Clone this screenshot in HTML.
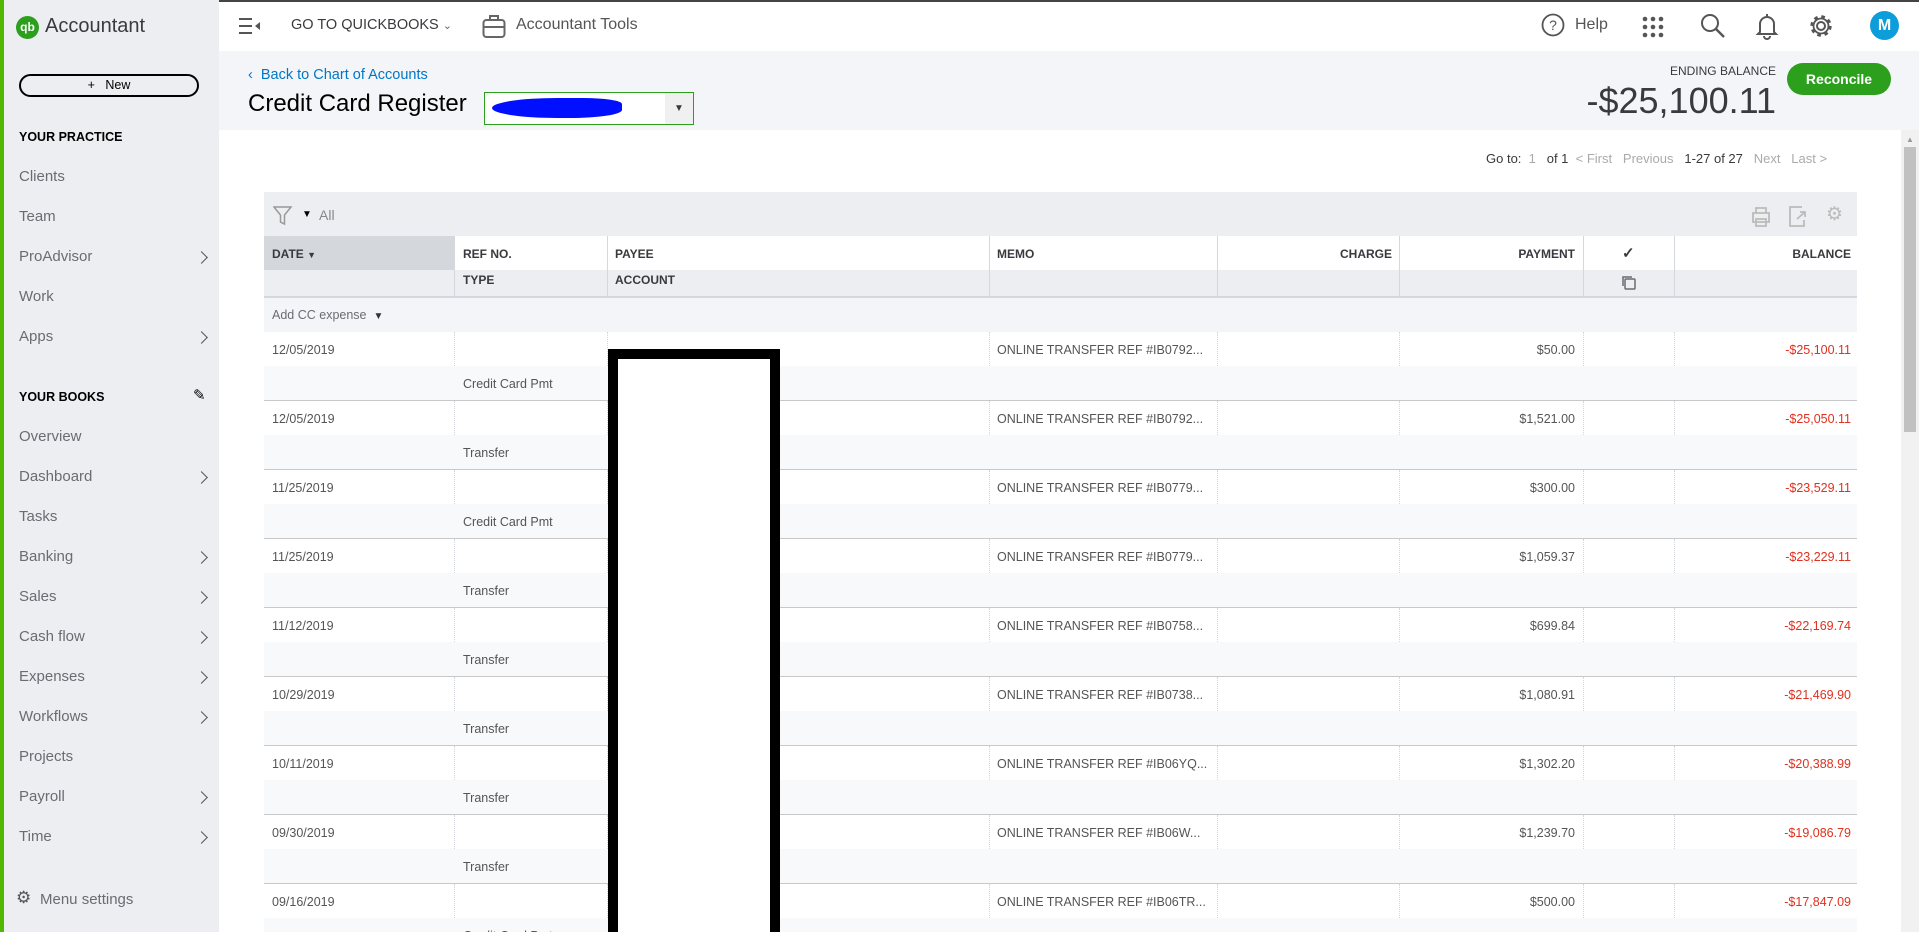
<!DOCTYPE html>
<html><head><meta charset="utf-8"><style>
*{box-sizing:border-box;margin:0;padding:0}
html,body{width:1919px;height:932px;overflow:hidden}
body{font-family:"Liberation Sans",sans-serif;background:#fff;position:relative;color:#393a3d}
#wrap{position:relative;width:1919px;height:932px;overflow:hidden}
.a{position:absolute;white-space:nowrap}
#side{left:0;top:0;width:219px;height:932px;background:#eceef1;border-left:4px solid #53b700}
.nav{position:absolute;left:15px;font-size:15px;color:#6b6c72}
.chev{position:absolute;left:193px;width:9px;height:9px;border-right:1.6px solid #555;border-top:1.6px solid #555;transform:rotate(45deg)}
.sec{position:absolute;left:15px;font-size:12.5px;font-weight:bold;color:#000}
.hd{font-size:12px;font-weight:bold;color:#393a3d}
.cell{font-size:12.5px;color:#555}
.r{text-align:right}
.vl{position:absolute;width:0;border-left:1px dotted #d4d7dc}
</style></head><body><div id="wrap">
<div class="a" style="left:0;top:0;width:1919px;height:2px;background:#444"></div>
<div class="a" id="side">
 <div class="a" style="left:12px;top:16px;width:23px;height:23px;border-radius:50%;background:#2ca01c;color:#fff;font-size:12px;font-weight:bold;text-align:center;line-height:23px">qb</div>
 <div class="a" style="left:41px;top:15px;font-size:20px;color:#393a3d">Accountant</div>
 <div class="a" style="left:15px;top:74px;width:180px;height:23px;border:2px solid #000;border-radius:12px;text-align:center;font-size:12.5px;line-height:19px;color:#000">+&nbsp;&nbsp; New</div>
 <div class="sec" style="top:130px">YOUR PRACTICE</div>
 <div class="nav" style="top:168px">Clients</div>
 <div class="nav" style="top:208px">Team</div>
 <div class="nav" style="top:248px">ProAdvisor</div><div class="chev" style="top:253px"></div>
 <div class="nav" style="top:288px">Work</div>
 <div class="nav" style="top:328px">Apps</div><div class="chev" style="top:333px"></div>
 <div class="sec" style="top:390px">YOUR BOOKS</div>
 <div class="a" style="left:189px;top:386px;font-size:15px;color:#000">✎</div>
 <div class="nav" style="top:428px">Overview</div>
 <div class="nav" style="top:468px">Dashboard</div><div class="chev" style="top:473px"></div>
 <div class="nav" style="top:508px">Tasks</div>
 <div class="nav" style="top:548px">Banking</div><div class="chev" style="top:553px"></div>
 <div class="nav" style="top:588px">Sales</div><div class="chev" style="top:593px"></div>
 <div class="nav" style="top:628px">Cash flow</div><div class="chev" style="top:633px"></div>
 <div class="nav" style="top:668px">Expenses</div><div class="chev" style="top:673px"></div>
 <div class="nav" style="top:708px">Workflows</div><div class="chev" style="top:713px"></div>
 <div class="nav" style="top:748px">Projects</div>
 <div class="nav" style="top:788px">Payroll</div><div class="chev" style="top:793px"></div>
 <div class="nav" style="top:828px">Time</div><div class="chev" style="top:833px"></div>
 <div class="nav" style="top:891px;left:36px">Menu settings</div>
 <div class="a" style="left:12px;top:888px;font-size:17px;color:#555">⚙</div>
</div>
<svg class="a" style="left:239px;top:17px" width="22" height="18"><g stroke="#555" stroke-width="2"><line x1="0" y1="2" x2="13" y2="2"/><line x1="0" y1="9" x2="13" y2="9"/><line x1="0" y1="16" x2="13" y2="16"/></g><path d="M21 5 L16 9 L21 13Z" fill="#555"/></svg>
<div class="a" style="left:291px;top:17px;font-size:14.5px;color:#393a3d">GO TO QUICKBOOKS <span style="font-size:11px;color:#666">&#8964;</span></div>
<svg class="a" style="left:482px;top:13px" width="24" height="26"><rect x="1.5" y="7" width="21" height="17" rx="3" fill="none" stroke="#666" stroke-width="2"/><path d="M8 7V3h8v4M1.5 14h21" fill="none" stroke="#666" stroke-width="2"/></svg>
<div class="a" style="left:516px;top:16px;font-size:16px;color:#555">Accountant Tools</div>
<svg class="a" style="left:1541px;top:13px" width="24" height="24"><circle cx="12" cy="12" r="10.5" fill="none" stroke="#555" stroke-width="1.8"/><text x="12" y="17" font-size="14" text-anchor="middle" fill="#555" font-family="Liberation Sans">?</text></svg>
<div class="a" style="left:1575px;top:16px;font-size:16px;color:#555">Help</div>
<svg class="a" style="left:1642px;top:16px" width="22" height="22"><g fill="#555"><circle cx="3" cy="3" r="2.3"/><circle cx="11" cy="3" r="2.3"/><circle cx="19" cy="3" r="2.3"/><circle cx="3" cy="11" r="2.3"/><circle cx="11" cy="11" r="2.3"/><circle cx="19" cy="11" r="2.3"/><circle cx="3" cy="19" r="2.3"/><circle cx="11" cy="19" r="2.3"/><circle cx="19" cy="19" r="2.3"/></g></svg>
<svg class="a" style="left:1700px;top:13px" width="26" height="26"><circle cx="10" cy="10" r="8" fill="none" stroke="#555" stroke-width="2"/><line x1="16" y1="16" x2="24" y2="24" stroke="#555" stroke-width="2.4"/></svg>
<svg class="a" style="left:1755px;top:12px" width="24" height="28"><path d="M12 2v2M5 20V12a7 7 0 0 1 14 0v8l2 2H3z M9 24a3 3 0 0 0 6 0" fill="none" stroke="#555" stroke-width="2"/></svg>
<svg class="a" style="left:1808px;top:13px" width="26" height="26"><circle cx="13" cy="13" r="4" fill="none" stroke="#555" stroke-width="2"/><circle cx="13" cy="13" r="9" fill="none" stroke="#555" stroke-width="3.4" stroke-dasharray="3.5 3.57"/><circle cx="13" cy="13" r="7.5" fill="none" stroke="#555" stroke-width="1.8"/></svg>
<div class="a" style="left:1870px;top:11px;width:29px;height:29px;border-radius:50%;background:#0d9ddb;color:#fff;font-weight:bold;font-size:16px;text-align:center;line-height:29px">M</div>
<div class="a" style="left:219px;top:51px;width:1700px;height:79px;background:#f4f5f8"></div>
<div class="a" style="left:248px;top:67px;font-size:14.5px;color:#0077c5">&#8249;&nbsp; Back to Chart of Accounts</div>
<div class="a" style="left:248px;top:90px;font-size:24px;color:#000">Credit Card Register</div>
<div class="a" style="left:484px;top:92px;width:210px;height:33px;border:1px solid #2ca01c;background:#fff"></div>
<div class="a" style="left:492px;top:98px;width:130px;height:20px;background:#0010ff;border-radius:50% 30% 40% 50%"></div>
<div class="a" style="left:665px;top:93px;width:28px;height:31px;background:#f0f0f0;font-size:10px;text-align:center;line-height:31px">▼</div>
<div class="a r" style="right:143px;top:64px;font-size:12px;color:#393a3d">ENDING BALANCE</div>
<div class="a r" style="right:143px;top:80px;font-size:36px;color:#393a3d">-$25,100.11</div>
<div class="a" style="left:1787px;top:63px;width:104px;height:32px;background:#2ca01c;border-radius:16px;color:#fff;font-weight:bold;font-size:14px;text-align:center;line-height:32px">Reconcile</div>
<div class="a" style="left:1901px;top:130px;width:18px;height:802px;background:#f1f1f1"></div>
<div class="a" style="left:1904px;top:147px;width:12px;height:285px;background:#c1c1c1"></div>
<div class="a" style="left:1906px;top:135px;font-size:8px;color:#999">▲</div>
<div class="a" style="left:1486px;top:151px;font-size:13px;color:#393a3d">Go to: &nbsp;<span style="color:#aaa">1</span>&nbsp;&nbsp; of 1 &nbsp;<span style="color:#aaa">&lt; First &nbsp;&nbsp;Previous</span> &nbsp;&nbsp;1-27 of 27 &nbsp;&nbsp;<span style="color:#aaa">Next &nbsp;&nbsp;Last &gt;</span></div>
<div class="a" style="left:264px;top:192px;width:1593px;height:44px;background:#eceef1"></div>
<svg class="a" style="left:273px;top:206px" width="20" height="20"><path d="M1 1h17l-6.5 8v9l-4-2V9z" fill="none" stroke="#999" stroke-width="1.5"/></svg>
<div class="a" style="left:302px;top:209px;font-size:10px;color:#000">▼</div>
<div class="a" style="left:319px;top:207px;font-size:14px;color:#888">All</div>
<svg class="a" style="left:1751px;top:206px" width="20" height="22"><path d="M5 7V2h10v5M2 7h16v9H2zM5 13h10v7H5z" fill="none" stroke="#bbb" stroke-width="1.8"/></svg>
<svg class="a" style="left:1788px;top:206px" width="20" height="22"><path d="M14 1H2v19h14v-6M9 13l8-7M12 6h5v5" fill="none" stroke="#bbb" stroke-width="1.8"/></svg>
<div class="a" style="left:1826px;top:203px;font-size:19px;color:#bbb">⚙</div>
<div class="a" style="left:264px;top:236px;width:1593px;height:34px;background:#fff"></div>
<div class="a" style="left:264px;top:270px;width:1593px;height:26px;background:#eceef1"></div>
<div class="a" style="left:264px;top:236px;width:190px;height:60px;background:#eceef1"></div>
<div class="a" style="left:264px;top:236px;width:190px;height:34px;background:#d4d7dc"></div>
<div class="a" style="left:264px;top:296px;width:1593px;height:2px;background:#d4d7dc"></div>
<div class="a" style="left:264px;top:298px;width:1593px;height:34px;background:#f4f5f8"></div>
<div class="a hd" style="left:272px;top:247px">DATE <span style="font-size:9px">▼</span></div>
<div class="a hd" style="left:463px;top:247px">REF NO.</div>
<div class="a hd" style="left:463px;top:273px">TYPE</div>
<div class="a hd" style="left:615px;top:247px">PAYEE</div>
<div class="a hd" style="left:615px;top:273px">ACCOUNT</div>
<div class="a hd" style="left:997px;top:247px">MEMO</div>
<div class="a hd r" style="right:527px;top:247px">CHARGE</div>
<div class="a hd r" style="right:344px;top:247px">PAYMENT</div>
<div class="a hd" style="left:1622px;top:244px;font-size:15px">✓</div>
<svg class="a" style="left:1620px;top:274px" width="16" height="16"><path d="M3 12V3h9" fill="none" stroke="#6b6c72" stroke-width="1.5"/><rect x="5" y="5" width="10" height="10" rx="1" fill="none" stroke="#6b6c72" stroke-width="1.5"/></svg>
<div class="a hd r" style="right:68px;top:247px">BALANCE</div>
<div class="a" style="left:454px;top:236px;width:1px;height:60px;background:#d4d7dc"></div>
<div class="a" style="left:607px;top:236px;width:1px;height:60px;background:#d4d7dc"></div>
<div class="a" style="left:989px;top:236px;width:1px;height:60px;background:#d4d7dc"></div>
<div class="a" style="left:1217px;top:236px;width:1px;height:60px;background:#d4d7dc"></div>
<div class="a" style="left:1399px;top:236px;width:1px;height:60px;background:#d4d7dc"></div>
<div class="a" style="left:1583px;top:236px;width:1px;height:60px;background:#d4d7dc"></div>
<div class="a" style="left:1674px;top:236px;width:1px;height:60px;background:#d4d7dc"></div>
<div class="a" style="left:272px;top:308px;font-size:12.5px;color:#6b6c72">Add CC expense &nbsp;<span style="font-size:10px;color:#333">▼</span></div>
<div id="rows"></div>
<script>
var d=[["12/05/2019","Credit Card Pmt","ONLINE TRANSFER REF #IB0792...","$50.00","-$25,100.11"],
["12/05/2019","Transfer","ONLINE TRANSFER REF #IB0792...","$1,521.00","-$25,050.11"],
["11/25/2019","Credit Card Pmt","ONLINE TRANSFER REF #IB0779...","$300.00","-$23,529.11"],
["11/25/2019","Transfer","ONLINE TRANSFER REF #IB0779...","$1,059.37","-$23,229.11"],
["11/12/2019","Transfer","ONLINE TRANSFER REF #IB0758...","$699.84","-$22,169.74"],
["10/29/2019","Transfer","ONLINE TRANSFER REF #IB0738...","$1,080.91","-$21,469.90"],
["10/11/2019","Transfer","ONLINE TRANSFER REF #IB06YQ...","$1,302.20","-$20,388.99"],
["09/30/2019","Transfer","ONLINE TRANSFER REF #IB06W...","$1,239.70","-$19,086.79"],
["09/16/2019","Credit Card Pmt","ONLINE TRANSFER REF #IB06TR...","$500.00","-$17,847.09"]];
var h="";
d.forEach(function(r,i){var t=332+i*69;
h+='<div class="a" style="left:264px;top:'+(t+34)+'px;width:1593px;height:34px;background:#f8f9fa"></div>';
h+='<div class="a" style="left:264px;top:'+(t+68)+'px;width:1593px;height:1px;background:#c8c8c8"></div>';
[454,607,989,1217,1399,1583,1674].forEach(function(x){h+='<div class="vl" style="left:'+x+'px;top:'+t+'px;height:34px"></div>'});
h+='<div class="a cell" style="left:272px;top:'+(t+11)+'px">'+r[0]+'</div>';
h+='<div class="a cell" style="left:463px;top:'+(t+45)+'px">'+r[1]+'</div>';
h+='<div class="a cell" style="left:997px;top:'+(t+11)+'px">'+r[2]+'</div>';
h+='<div class="a cell r" style="right:344px;top:'+(t+11)+'px">'+r[3]+'</div>';
h+='<div class="a cell r" style="right:68px;top:'+(t+11)+'px;color:#e0301e">'+r[4]+'</div>';});
h+='<div class="a" style="left:608px;top:349px;width:172px;height:583px;border:10px solid #000;border-bottom:none;background:#fff"></div>';
document.getElementById("rows").innerHTML=h;
</script>
</div></body></html>
